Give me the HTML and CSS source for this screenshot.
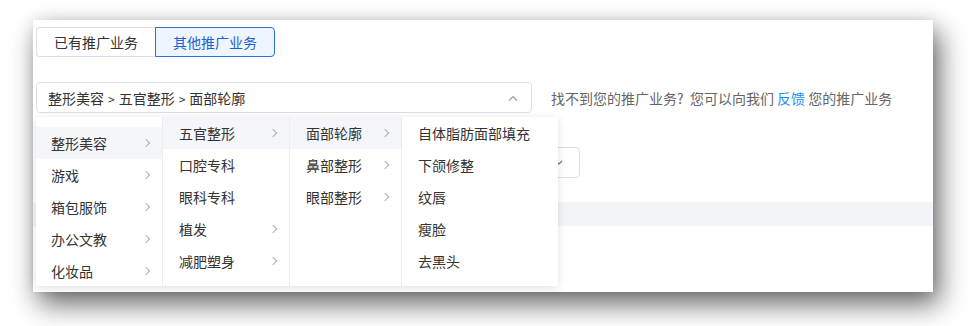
FILE: index.html
```html
<!DOCTYPE html>
<html>
<head>
    <title>推广业务</title>
    <link rel="stylesheet" href="styles.css">
</head>
<body>
    <div class="panel">
        <div class="tabs">
            <div class="tab">已有推广业务</div>
            <div class="tab active">其他推广业务</div>
        </div>

        <div class="picker-row">
            <div class="cascader">
                <span class="value">整形美容<span class="sep">&gt;</span>五官整形<span class="sep">&gt;</span>面部轮廓</span>
                <svg class="caret" width="10" height="6" viewBox="0 0 10 6"><path d="M1 5.5 L5 1.5 L9 5.5" fill="none" stroke="#a0a0a0" stroke-width="1.2"/></svg>
            </div>
            <p class="hint">找不到您的推广业务? &nbsp;您可以向我们 <a href="#">反馈</a> 您的推广业务</p>
        </div>

        <div class="second-row">
            <div class="select">
                <svg class="caret" width="8" height="5" viewBox="0 0 8 5"><path d="M1 1 L4 4 L7 1" fill="none" stroke="#777" stroke-width="1.2"/></svg>
            </div>
        </div>

        <div class="band"></div>

        <div class="menu">
            <ul class="col col-first">
                <li class="on">整形美容<i></i></li>
                <li>游戏<i></i></li>
                <li>箱包服饰<i></i></li>
                <li>办公文教<i></i></li>
                <li>化妆品<i></i></li>
            </ul>
            <ul class="col">
                <li class="on">五官整形<i></i></li>
                <li>口腔专科</li>
                <li>眼科专科</li>
                <li>植发<i></i></li>
                <li>减肥塑身<i></i></li>
            </ul>
            <ul class="col col-narrow">
                <li class="on">面部轮廓<i></i></li>
                <li>鼻部整形<i></i></li>
                <li>眼部整形<i></i></li>
            </ul>
            <ul class="col col-wide">
                <li>自体脂肪面部填充</li>
                <li>下颌修整</li>
                <li>纹唇</li>
                <li>瘦脸</li>
                <li>去黑头</li>
            </ul>
        </div>
    </div>
</body>
</html>
```

FILE: styles.css
```css
body {
    margin: 0;
    padding: 20px 0 0 33px;
    background: #fff;
    font-family: 'Noto Sans CJK SC', 'Noto Sans', sans-serif;
    font-size: 14px;
    color: #333;
    height: 326px;
    box-sizing: border-box;
    overflow: hidden;
}

.panel {
    position: relative;
    width: 900px;
    height: 272px;
    padding: 7px 0 0 3px;
    box-sizing: border-box;
    background: #fff;
    box-shadow: 6px 12px 26px rgba(0, 0, 0, 0.6), 0 0 12px rgba(0, 0, 0, 0.08);
}

.tabs {
    display: flex;
}

.tab {
    height: 30px;
    line-height: 29px;
    padding: 0 17px;
    border: 1px solid #dcdfe6;
    box-sizing: border-box;
    color: #333;
}

.tab:first-child {
    border-radius: 4px 0 0 4px;
    border-right: none;
}

.tab.active {
    border-color: #2f6fd6;
    border-radius: 0 4px 4px 0;
    background: #eef5ff;
    color: #1f5fcf;
}

.picker-row {
    display: flex;
    align-items: center;
    margin-top: 25px;
}

.cascader {
    display: flex;
    align-items: center;
    justify-content: space-between;
    width: 496px;
    height: 31px;
    padding: 0 13px 0 11px;
    border: 1px solid #dcdfe6;
    border-radius: 4px;
    box-sizing: border-box;
}

.sep {
    margin: 0 4px;
    font-size: 12px;
}

.hint {
    margin: 0 0 0 19px;
    color: #666;
}

.hint a {
    color: #1890ff;
    text-decoration: none;
}

.second-row {
    display: flex;
    justify-content: flex-end;
    width: 544px;
    margin-top: 34px;
}

.select {
    display: flex;
    align-items: center;
    justify-content: flex-end;
    width: 160px;
    height: 31px;
    padding-right: 16px;
    border: 1px solid #dcdfe6;
    border-radius: 4px;
    box-sizing: border-box;
}

.band {
    height: 24px;
    margin: 24px 0 0 -3px;
    background: #f3f4f7;
}

.menu {
    position: absolute;
    top: 97px;
    left: 3px;
    display: flex;
    height: 169px;
    background: #fff;
    box-shadow: 0 2px 10px rgba(0, 0, 0, 0.12);
    border-radius: 2px;
    overflow: hidden;
}

.col {
    list-style: none;
    margin: 0;
    padding: 0;
    width: 127px;
    border-right: 1px solid #eceef2;
    box-sizing: border-box;
}

.col:last-child {
    border-right: none;
}

.col-first {
    padding-top: 10px;
}

.col-narrow {
    width: 112px;
}

.col-wide {
    width: 156px;
}

.col li {
    position: relative;
    height: 32px;
    line-height: 32px;
    padding: 0 16px;
    white-space: nowrap;
}

.col-first li {
    padding-left: 15px;
}

.col li.on {
    background: #f5f6f9;
}

.col li i {
    position: absolute;
    right: 13px;
    top: 13px;
    width: 5px;
    height: 5px;
    border-top: 1px solid #b0b0b0;
    border-right: 1px solid #b0b0b0;
    transform: rotate(45deg);
}
```
